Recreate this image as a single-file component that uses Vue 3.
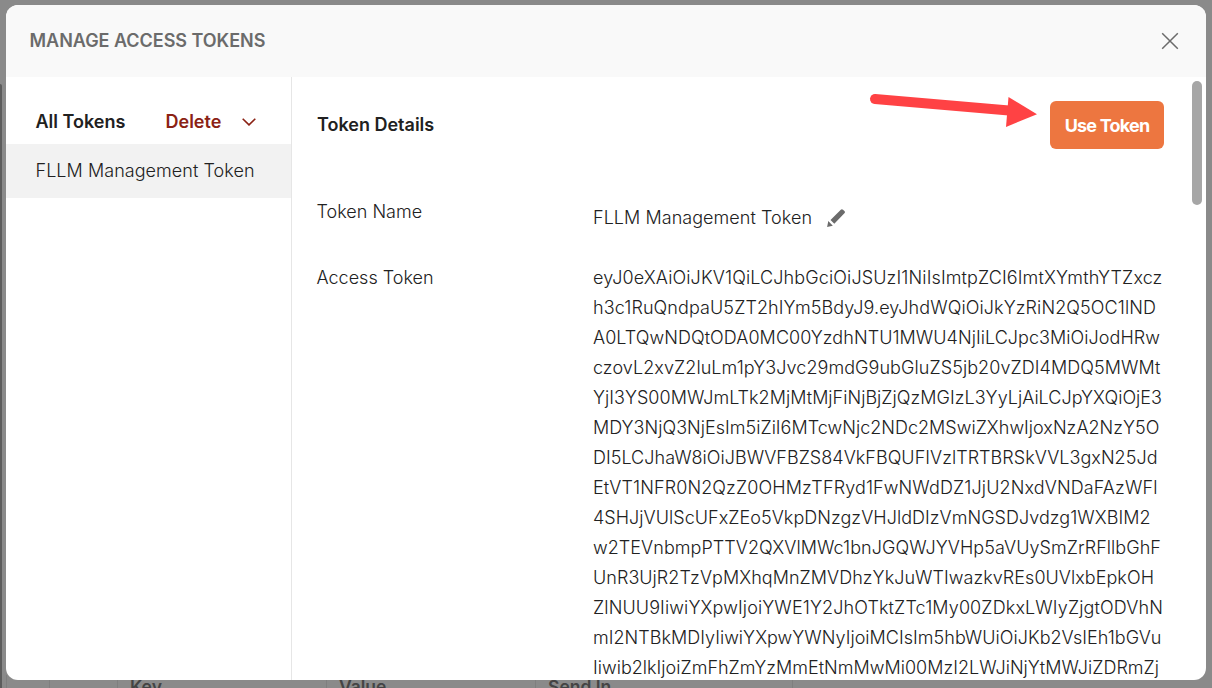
<script setup>
import { onMounted, ref } from 'vue'

const tokenLines = [
  { text: 'eyJ0eXAiOiJKV1QiLCJhbGciOiJSUzI1NiIsImtpZCI6ImtXYmthYTZxcz', width: 569.5 },
  { text: 'h3c1RuQndpaU5ZT2hIYm5BdyJ9.eyJhdWQiOiJkYzRiN2Q5OC1lND', width: 563 },
  { text: 'A0LTQwNDQtODA0MC00YzdhNTU1MWU4NjIiLCJpc3MiOiJodHRw', width: 567 },
  { text: 'czovL2xvZ2luLm1pY3Jvc29mdG9ubGluZS5jb20vZDI4MDQ5MWMt', width: 567.5 },
  { text: 'YjI3YS00MWJmLTk2MjMtMjFiNjBjZjQzMGIzL3YyLjAiLCJpYXQiOjE3', width: 569 },
  { text: 'MDY3NjQ3NjEsIm5iZiI6MTcwNjc2NDc2MSwiZXhwIjoxNzA2NzY5O', width: 566.5 },
  { text: 'DI5LCJhaW8iOiJBWVFBZS84VkFBQUFIVzlTRTBRSkVVL3gxN25Jd', width: 564.5 },
  { text: 'EtVT1NFR0N2QzZ0OHMzTFRyd1FwNWdDZ1JjU2NxdVNDaFAzWFl', width: 564.5 },
  { text: '4SHJjVUlScUFxZEo5VkpDNzgzVHJldDIzVmNGSDJvdzg1WXBIM2', width: 557.5 },
  { text: 'w2TEVnbmpPTTV2QXVlMWc1bnJGQWJYVHp5aVUySmZrRFllbGhF', width: 568 },
  { text: 'UnR3UjR2TzVpMXhqMnZMVDhzYkJuWTIwazkvREs0UVlxbEpkOH', width: 561 },
  { text: 'ZlNUU9IiwiYXpwIjoiYWE1Y2JhOTktZTc1My00ZDkxLWIyZjgtODVhN', width: 570 },
  { text: 'mI2NTBkMDIyIiwiYXpwYWNyIjoiMCIsIm5hbWUiOiJKb2VsIEh1bGVu', width: 568.5 },
  { text: 'Iiwib2lkIjoiZmFhZmYzMmEtNmMwMi00MzI2LWJiNjYtMWJiZDRmZj', width: 566 },
]
const spans = ref([])
const spacing = ref(tokenLines.map(() => 0))

onMounted(() => {
  spacing.value = tokenLines.map((line, i) => (line.width - spans.value[i].getBoundingClientRect().width) / line.text.length)
})
</script>

<template>
  <div class="page">
    <div class="backdrop">
      <i class="panel-edge"></i>
      <div class="columns">
        <span class="c0"></span><span class="c1"></span><span class="c2">Key</span><span class="c3">Value</span><span class="c4">Send In</span><span class="c5"></span>
      </div>
    </div>
    <section class="modal">
      <header class="head">
        <h1>MANAGE ACCESS TOKENS</h1>
        <svg class="close" width="18" height="18" viewBox="0 0 18 18"><path d="M1.2 1.2 16.8 16.8M16.8 1.2 1.2 16.8" /></svg>
      </header>
      <div class="body">
        <aside>
          <div class="list-head">
            <b>All Tokens</b>
            <span class="delete">Delete</span>
            <svg width="14" height="8" viewBox="0 0 14 8"><path d="M.7.7 7 6.9 13.3.7" /></svg>
          </div>
          <div class="item">FLLM Management Token</div>
        </aside>
        <main>
          <div class="title-row">
            <h2>Token Details</h2>
            <button>Use Token</button>
          </div>
          <div class="field name">
            <label>Token Name</label>
            <div class="name-value">
              <span>FLLM Management Token</span>
              <svg width="18" height="18" viewBox="0 0 18 18"><path d="M.1 18 1.3 12 5.8 16.7ZM3.5 11.1 13.8.7Q14.9-.3 16 .7L17.4 2.1Q18.5 3.2 17.4 4.3L7.3 14.7Z" /></svg>
            </div>
          </div>
          <div class="field token">
            <label>Access Token</label>
            <div class="token-value">
              <div v-for="(line, i) in tokenLines" :key="i"><span ref="spans" :style="{ letterSpacing: spacing[i] + 'px' }">{{ line.text }}</span></div>
            </div>
          </div>
        </main>
        <i class="thumb"></i>
      </div>
    </section>
    <svg class="arrow" width="170" height="36" viewBox="0 0 170 36"><path class="shaft" d="M6 6 140 17.5" /><path class="tip" d="M139.5 4 168 21.2 137 34Z" /></svg>
  </div>
</template>

<style>
body { overflow: hidden; }
</style>

<style scoped>
.page { position: relative; width: 1212px; height: 688px; overflow: hidden; background: #8a8a8a; font-family: Inter, "Liberation Sans", sans-serif; font-size: 18px; font-weight: 350; color: #212121; display: flex; padding: 5px 6px 8px; box-sizing: border-box; }
.backdrop { position: absolute; inset: 0; }
.panel-edge { position: absolute; left: 0; top: 84px; bottom: 0; width: 2px; background: #5c5c5c; border-radius: 0 2px 0 0; }
.columns { position: absolute; left: 6px; right: 0; top: 675px; height: 24px; display: flex; font-size: 17.5px; line-height: 24px; font-weight: 600; color: #444; }
.columns span { box-sizing: border-box; border-left: 1px solid #7f7f7f; padding-left: 12px; }
.c0 { width: 43px; }
.c1 { width: 68px; }
.c2 { width: 209px; }
.c3 { width: 209px; }
.c4 { width: 257px; }
.c5 { flex: 1; }
.modal { position: relative; width: 1200px; height: 675px; background: #fff; border-radius: 12px; overflow: hidden; display: flex; flex-direction: column; }
.head { flex: none; height: 72px; background: #f9f9f9; display: flex; align-items: center; justify-content: space-between; padding: 0 27px 0 23.5px; box-sizing: border-box; }
h1, h2 { margin: 0; padding-bottom: 1px; font-size: 18px; font-weight: 600; white-space: nowrap; }
h1 { color: #6b6b6b; letter-spacing: -.03px; }
.close path { fill: none; stroke: #6b6b6b; stroke-width: 1.5; }
.body { position: relative; flex: 1; display: flex; min-height: 0; }
aside { flex: none; box-sizing: border-box; width: 286px; border-right: 1px solid #e6e6e6; }
.list-head { height: 67px; box-sizing: border-box; padding: 23px 0 0 29.5px; line-height: 44px; display: flex; align-items: center; font-weight: 600; }
.list-head b { width: 130px; font-weight: 600; }
.delete { width: 76.5px; color: #8b2214; }
.list-head path { fill: none; stroke: #8b2214; stroke-width: 1.6; }
.item { height: 54px; line-height: 54px; background: #f2f2f2; padding-left: 29.5px; white-space: nowrap; letter-spacing: .05px; }
main { flex: none; width: 872px; padding: 24px 0 0 25px; box-sizing: border-box; }
.title-row { display: flex; justify-content: space-between; align-items: center; height: 48px; }
h2 { padding-bottom: 2px; }
button { width: 114px; height: 48px; padding: 0; border: 0; border-radius: 6px; background: #ed7640; color: #fff; font: 700 18px Inter, sans-serif; letter-spacing: -.8px; }
.field { display: flex; }
.field label { width: 276px; flex: none; line-height: 30px; margin-left: -.5px; margin-right: .5px; }
.name { margin-top: 48px; height: 66px; }
.name-value { display: flex; align-items: center; height: 42px; letter-spacing: .05px; }
.name-value span { width: 234px; padding-bottom: 1px; white-space: nowrap; }
.name-value path { fill: #6b6b6b; }
.token-value { line-height: 30px; white-space: nowrap; }
.thumb { position: absolute; right: 4px; top: 4px; width: 10px; height: 124px; border-radius: 5px; background: #a6a6a6; }
.arrow { position: absolute; left: 869px; top: 93px; }
.shaft { fill: none; stroke: #ff4244; stroke-width: 10; stroke-linecap: round; }
.tip { fill: #ff4244; }
</style>
